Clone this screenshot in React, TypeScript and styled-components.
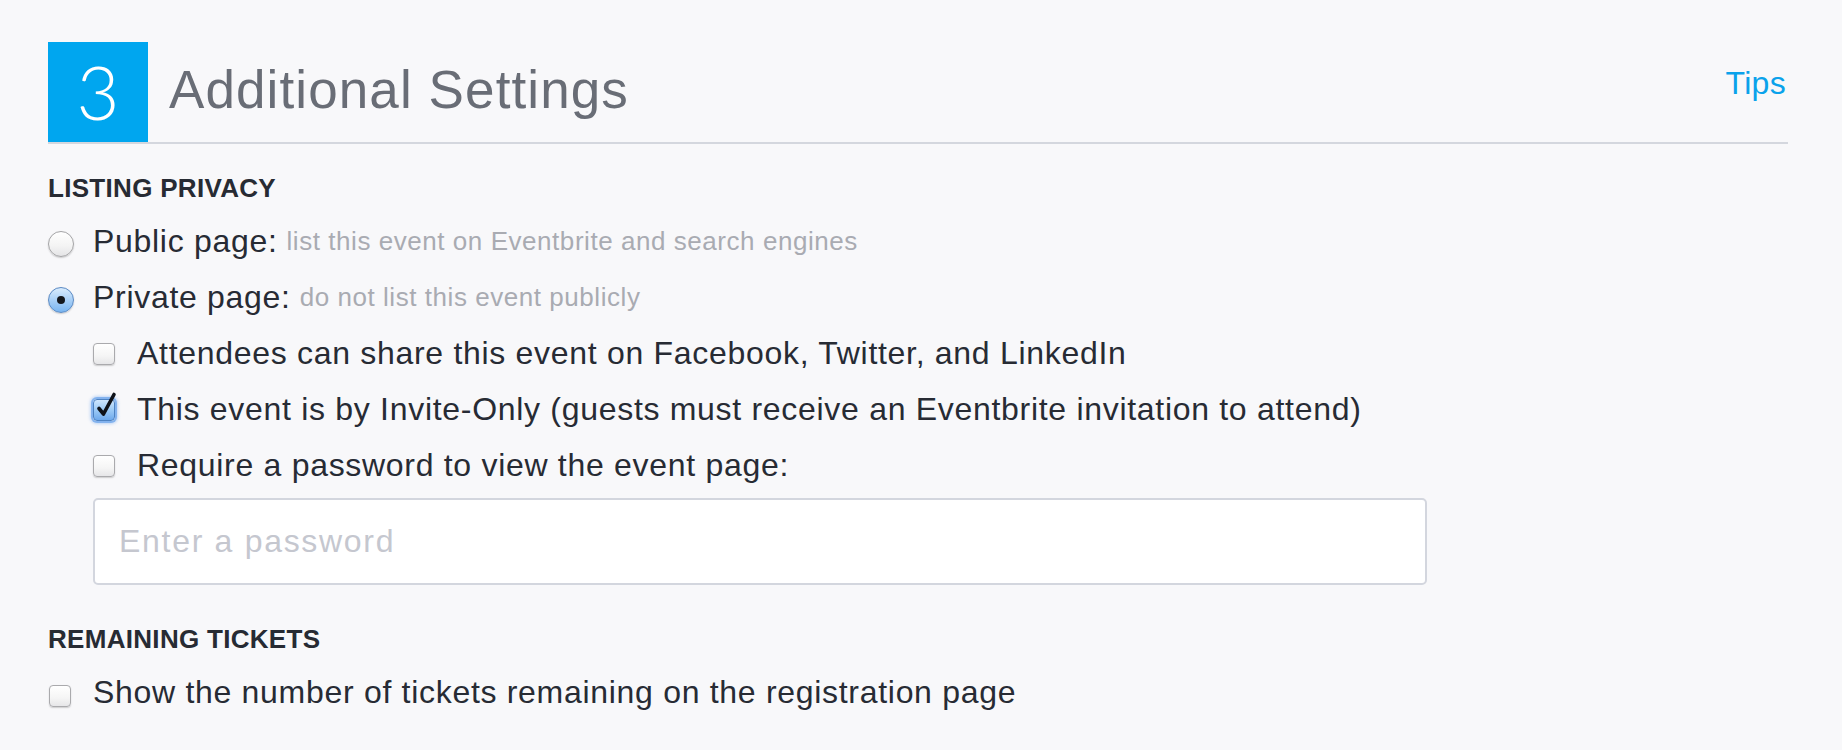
import React from "react";
import styled, { createGlobalStyle } from "styled-components";

const GlobalStyle = createGlobalStyle`
  html, body {
    margin: 0;
    padding: 0;
    background: #f8f8fa;
  }
  body {
    font-family: "Liberation Sans", Arial, sans-serif;
    color: #282c35;
  }
`;

const Page = styled.div`
  width: 1740px;
  padding: 42px 0 0 48px;
`;

const Header = styled.header`
  display: flex;
  align-items: stretch;
  height: 100px;
  border-bottom: 2px solid #d4d7de;
`;

const StepBox = styled.div`
  width: 100px;
  height: 100px;
  flex: 0 0 100px;
  display: flex;
  align-items: center;
  justify-content: center;
  background: #00a6ef;
  color: #ffffff;
  font-family: "Lato", "Liberation Sans", sans-serif;
  font-weight: 300;
  font-size: 74px;
  line-height: 1;
`;

const Title = styled.h1`
  margin: 0 0 5px 21px;
  align-self: center;
  font-weight: 400;
  font-size: 53px;
  letter-spacing: 1.1px;
  color: #696d76;
  line-height: 1;
`;

const TipsLink = styled.a`
  margin: 25px 2px 0 auto;
  align-self: flex-start;
  font-size: 32px;
  line-height: 32px;
  letter-spacing: 0.3px;
  color: #0aa2eb;
  text-decoration: none;
  cursor: pointer;
`;

const SectionHeading = styled.h2<{ $top: number }>`
  margin: ${(p) => p.$top}px 0 10px 0;
  font-size: 26px;
  line-height: 30px;
  font-weight: 700;
  color: #272b33;
  letter-spacing: 0.3px;
`;

const OptionRow = styled.label<{ $indent?: number }>`
  display: flex;
  align-items: flex-start;
  height: 56px;
  padding-left: ${(p) => p.$indent ?? 0}px;
  font-size: 32px;
  line-height: 56px;
  letter-spacing: 0.7px;
  color: #272b34;
  white-space: nowrap;
  cursor: pointer;
`;

const Hint = styled.span`
  margin-left: 9px;
  font-size: 26px;
  letter-spacing: 0.55px;
  color: #a9abb2;
`;

const RadioDot = styled.span<{ $checked?: boolean }>`
  position: relative;
  flex: 0 0 26px;
  width: 26px;
  height: 26px;
  margin: 18px 19px 0 0;
  box-sizing: border-box;
  border-radius: 50%;
  border: 1px solid ${(p) => (p.$checked ? "#5b8ac4" : "#a4a4a6")};
  background: ${(p) =>
    p.$checked
      ? "linear-gradient(180deg, #d9ecfd 0%, #a9d0f7 50%, #79b5f1 100%)"
      : "linear-gradient(180deg, #ffffff 0%, #f3f3f3 60%, #e4e4e6 100%)"};
  box-shadow: 0 1px 1.5px rgba(0, 0, 0, 0.18);

  &::after {
    content: "";
    display: ${(p) => (p.$checked ? "block" : "none")};
    position: absolute;
    left: 50%;
    top: 50%;
    width: 8px;
    height: 8px;
    margin: -4px 0 0 -4px;
    border-radius: 50%;
    background: #14171c;
  }
`;

const CheckBox = styled.span<{ $checked?: boolean; $shift?: number }>`
  position: relative;
  flex: 0 0 22px;
  width: 22px;
  height: 22px;
  margin: ${(p) => 18 + (p.$shift ?? 0)}px 22px 0 0;
  box-sizing: border-box;
  border-radius: 4px;
  border: 1px solid ${(p) => (p.$checked ? "#4d82c2" : "#aaaaad")};
  background: ${(p) =>
    p.$checked
      ? "linear-gradient(180deg, #cfe6fd 0%, #9ccaf6 50%, #6ea9ec 100%)"
      : "linear-gradient(180deg, #ffffff 0%, #f5f5f5 60%, #e6e6e8 100%)"};
  box-shadow: ${(p) =>
    p.$checked
      ? "0 0 0 2px rgba(110, 165, 235, 0.75), 0 0 3px 3px rgba(120, 170, 240, 0.45)"
      : "0 1px 1.5px rgba(0, 0, 0, 0.18)"};
`;

const CheckMark = styled.svg`
  position: absolute;
  left: 1px;
  top: -7px;
  width: 22px;
  height: 25px;
  overflow: visible;
`;

const PasswordInput = styled.input`
  display: block;
  box-sizing: border-box;
  width: 1334px;
  height: 87px;
  margin: 5px 0 0 45px;
  padding: 0 0 0 24px;
  border: 2px solid #d3d6de;
  border-radius: 5px;
  background: #ffffff;
  font-family: "Liberation Sans", Arial, sans-serif;
  font-size: 32px;
  letter-spacing: 1.7px;
  color: #282c35;
  outline: none;

  &::placeholder {
    color: #c5c7cf;
  }
`;

type CheckProps = { checked?: boolean; shift?: number };

function Check({ checked, shift }: CheckProps) {
  return (
    <CheckBox $checked={checked} $shift={shift}>
      {checked && (
        <CheckMark viewBox="0 0 22 25">
          <path
            d="M4 15.5 L8.5 21 L19 1.5"
            fill="none"
            stroke="#0f1218"
            strokeWidth="3.6"
            strokeLinecap="round"
            strokeLinejoin="round"
          />
        </CheckMark>
      )}
    </CheckBox>
  );
}

export default function App() {
  return (
    <>
      <GlobalStyle />
      <Page>
        <Header>
          <StepBox>3</StepBox>
          <Title>Additional Settings</Title>
          <TipsLink>Tips</TipsLink>
        </Header>

        <SectionHeading $top={29}>LISTING PRIVACY</SectionHeading>
        <OptionRow>
          <RadioDot />
          Public page:
          <Hint>list this event on Eventbrite and search engines</Hint>
        </OptionRow>
        <OptionRow>
          <RadioDot $checked />
          Private page:
          <Hint>do not list this event publicly</Hint>
        </OptionRow>
        <OptionRow $indent={45}>
          <Check />
          Attendees can share this event on Facebook, Twitter, and LinkedIn
        </OptionRow>
        <OptionRow $indent={45}>
          <Check checked />
          This event is by Invite-Only (guests must receive an Eventbrite invitation to attend)
        </OptionRow>
        <OptionRow $indent={45}>
          <Check />
          Require a password to view the event page:
        </OptionRow>
        <PasswordInput type="password" placeholder="Enter a password" />

        <SectionHeading $top={39}>REMAINING TICKETS</SectionHeading>
        <OptionRow $indent={1}>
          <Check shift={3} />
          Show the number of tickets remaining on the registration page
        </OptionRow>
      </Page>
    </>
  );
}
